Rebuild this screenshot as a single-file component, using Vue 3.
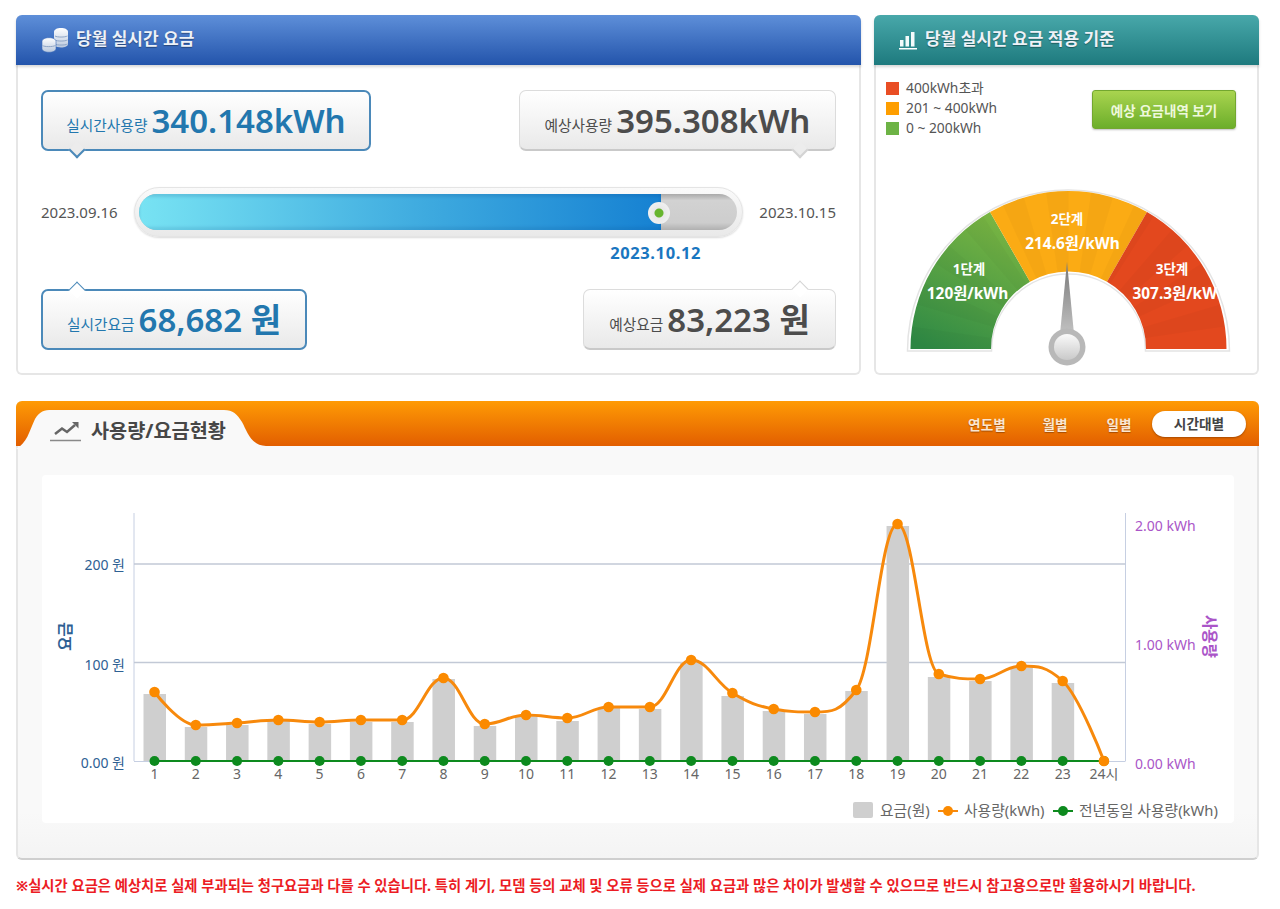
<template>
  <div class="page">
    <div class="top">
      <section class="panel usage">
        <header class="head blue">
          <svg class="coins" width="28" height="26" viewBox="0 0 28 26">
            <defs>
              <linearGradient id="coin" x1="0" y1="0" x2="0" y2="1">
                <stop offset="0" stop-color="#ffffff" />
                <stop offset="1" stop-color="#b9c8de" />
              </linearGradient>
            </defs>
            <path d="M13 5c0-2.500 3-4 7-4s7 1.500 7 4v12c0 2.200-3 3.600-7 3.600l-7-1z" fill="url(#coin)" />
            <path d="M14 9c2 1.400 10 1.400 12.500 0M14 13c2 1.400 10 1.400 12.500 0M14 17c2 1.400 10 1.400 12.500 0" stroke="#8ea5c6" fill="none" />
            <path d="M1 14.500c0-2.300 3-3.800 7-3.800s7 1.500 7 3.800v7c0 2.300-3 3.800-7 3.800s-7-1.500-7-3.800z" fill="url(#coin)" stroke="#3d6cb8" stroke-width=".6" />
            <path d="M1.500 18.500c2 1.500 10 1.500 13 0" stroke="#8ea5c6" fill="none" />
          </svg>
          <h2>당월 실시간 요금</h2>
        </header>
        <div class="usage-body">
          <div class="bubble-row">
            <div class="bubble on arrow-bottom" style="width:330px"><span class="lab">실시간사용량</span><b>340.148kWh</b></div>
            <div class="bubble arrow-bottom right" style="width:317px"><span class="lab">예상사용량</span><b>395.308kWh</b></div>
          </div>
          <div class="progress-row">
            <span class="date">2023.09.16</span>
            <div class="track">
              <div class="track-in">
                <div class="fill"></div>
                <i class="thumb"></i>
              </div>
            </div>
            <span class="date">2023.10.15</span>
          </div>
          <div class="today">2023.10.12</div>
          <div class="bubble-row">
            <div class="bubble on arrow-top" style="width:266px"><span class="lab">실시간요금</span><b>68,682 원</b></div>
            <div class="bubble arrow-top right" style="width:253px"><span class="lab">예상요금</span><b>83,223 원</b></div>
          </div>
        </div>
      </section>

      <section class="panel rate">
        <header class="head teal">
          <svg width="20" height="22" viewBox="0 0 20 22">
            <path d="M1 19h18v1.500H1z" fill="#fff" />
            <path d="M2 11h3.500v6.500H2zM7.500 7H11v10.500H7.500zM13 3h3.500v14.500H13z" fill="#f4fbfb" />
          </svg>
          <h2>당월 실시간 요금 적용 기준</h2>
        </header>
        <div class="rate-body">
          <div class="rate-top">
            <ul class="steps">
              <li><i style="background:#e94e24"></i>400kWh초과</li>
              <li><i style="background:#fe9e00"></i>201 ~ 400kWh</li>
              <li><i style="background:#6db345"></i>0 ~ 200kWh</li>
            </ul>
            <button class="detail">예상 요금내역 보기</button>
          </div>
          <svg class="gauge" width="345" height="186" viewBox="894 183 345 186">
            <defs>
              <linearGradient id="gGreen" gradientUnits="userSpaceOnUse" x1="1000" y1="205" x2="930" y2="350">
                <stop offset="0" stop-color="#80b942" />
                <stop offset="1" stop-color="#2f8a45" />
              </linearGradient>
              <linearGradient id="gNeedle" x1="0" y1="0" x2="0" y2="1">
                <stop offset="0" stop-color="#777" />
                <stop offset="1" stop-color="#c2c2c2" />
              </linearGradient>
              <linearGradient id="gKnob" x1="0" y1="0" x2="0" y2="1">
                <stop offset="0" stop-color="#fafafa" />
                <stop offset="1" stop-color="#c9c9c9" />
              </linearGradient>
            </defs>
            <path d="M905.500 351a161 161 0 0 1 322 0h-84a76.500 76.500 0 0 0-154 0z" fill="#fff" stroke="#e4e4e4" stroke-width="1.500" />
            <path d="M908.500 349a158 158 0 0 1 79.500-137L1028 281.700a77.500 77.500 0 0 0-39 67.300z" fill="url(#gGreen)" />
            <path d="M988 212a158 158 0 0 1 157 0L1105 281.700a77.500 77.500 0 0 0-77 0z" fill="#fbab14" />
            <path d="M1145 212a158 158 0 0 1 79.500 137H1144a77.500 77.500 0 0 0-39-67.300z" fill="#e3481e" />
            <path v-for="(d, i) in rays" :key="i" :d="d" fill="#000" opacity=".025" />
            <text class="g-t" x="1065" y="224">2단계</text>
            <text class="g-v" x="1070.500" y="249">214.6원/kWh</text>
            <text class="g-t" x="967" y="274">1단계</text>
            <text class="g-v" x="965.500" y="299">120원/kWh</text>
            <text class="g-t" x="1170" y="274">3단계</text>
            <svg x="1120" y="280" width="96" height="30" viewBox="1120 280 96 30">
              <text class="g-v" x="1130.500" y="299" style="text-anchor:start">307.3원/kWh</text>
            </svg>
            <path d="M1065 262l7 72h-14z" fill="url(#gNeedle)" />
            <circle cx="1065" cy="347" r="18.500" fill="#b8b8b8" />
            <circle cx="1065" cy="347" r="13" fill="url(#gKnob)" />
          </svg>
        </div>
      </section>
    </div>

    <section class="panel status">
      <header class="status-head">
        <svg class="tab" width="250" height="48" viewBox="0 0 250 48">
          <path d="M0 48c11-6 13-17 19-30C24 10 28 9 36 9h172c9 0 13 4 18 12 5 9 9 24 24 24v3z" fill="#f9f9f9" />
        </svg>
        <div class="tab-label">
          <svg width="32" height="26" viewBox="0 0 32 26">
            <path d="M5 17l7-5.500 5 3.500 8-7" fill="none" stroke="#666" stroke-width="2.500" />
            <path d="M22 5h6.500v6.500z" fill="#666" />
            <path d="M0 23.500h31" stroke="#8a8a8a" stroke-width="1.500" />
          </svg>
          <h2>사용량/요금현황</h2>
        </div>
        <nav class="periods">
          <a style="width:68px">연도별</a>
          <a style="width:68px">월별</a>
          <a style="width:60px">일별</a>
          <a class="sel">시간대별</a>
        </nav>
      </header>
      <div class="status-body">
        <svg class="chart" width="1192" height="348" viewBox="42 475 1192 348">
          <path d="M134 513V761M1125.500 513V761" stroke="#c6cfe2" fill="none" />
          <path d="M134 564H1125.500M134 662.500H1125.500" stroke="#c2c9d6" stroke-width="1.500" fill="none" />
          <path d="M134 761.500H1125.500" stroke="#c6cfe2" fill="none" />

          <rect v-for="b in bars" :key="b.x" :x="b.x - 11" :y="b.y" width="22.500" :height="761 - b.y" fill="#cfcfcf" />

          <path d="M154.500 761H1104" stroke="#0d8a1e" stroke-width="2" fill="none" />
          <circle v-for="x in xs" :key="x" :cx="x" cy="761" r="5" fill="#0d8a1e" />
          <path :d="linePath" stroke="#f7890c" stroke-width="3" fill="none" />
          <circle v-for="p in points" :key="p.x" :cx="p.x" :cy="p.y" r="5.300" fill="#fb8a00" />

          <text v-for="(x, i) in xs" :key="'h' + i" class="x-lab" :x="x" y="779">{{ i === 23 ? '24시' : i + 1 }}</text>

          <text class="y-l" x="125" y="570">200 원</text>
          <text class="y-l" x="125" y="670">100 원</text>
          <text class="y-l" x="125" y="768">0.00 원</text>
          <text class="y-l title" transform="translate(71 636.500) rotate(-90)">요금</text>

          <text class="y-r" x="1135" y="531">2.00 kWh</text>
          <text class="y-r" x="1135" y="650">1.00 kWh</text>
          <text class="y-r" x="1135" y="769">0.00 kWh</text>
          <text class="y-r title" transform="translate(1204 636.500) rotate(90)">사용량</text>

          <rect x="853" y="802" width="20" height="16" rx="2" fill="#cfcfcf" />
          <text class="leg" x="880" y="816">요금(원)</text>
          <path d="M938 811h20" stroke="#f7890c" stroke-width="2" />
          <circle cx="948" cy="811" r="5" fill="#fb8a00" />
          <text class="leg" x="964" y="816">사용량(kWh)</text>
          <path d="M1053 811h20" stroke="#0d8a1e" stroke-width="2" />
          <circle cx="1063" cy="811" r="5" fill="#0d8a1e" />
          <text class="leg" x="1079" y="816">전년동일 사용량(kWh)</text>
        </svg>
      </div>
    </section>

    <p class="notice">※실시간 요금은 예상치로 실제 부과되는 청구요금과 다를 수 있습니다. 특히 계기, 모뎀 등의 교체 및 오류 등으로 실제 요금과 많은 차이가 발생할 수 있으므로 반드시 참고용으로만 활용하시기 바랍니다.</p>
  </div>
</template>

<script setup>
const barTops = [694, 727, 725, 721, 724, 722, 722, 679, 726, 716, 721, 708, 709, 662, 696, 711, 714, 691, 526, 677, 681, 668, 683]
const lineTops = [692, 725, 723, 720, 722, 720, 720, 678, 724, 715, 718, 707, 707, 660, 693, 709, 712, 690, 524, 674, 679, 666, 681, 761]

const xs = lineTops.map((_, i) => 154.5 + i * 41.28)
const bars = barTops.map((y, i) => ({ x: xs[i], y }))
const points = lineTops.map((y, i) => ({ x: xs[i], y }))

// same smoothing as a highcharts spline
function spline(pts) {
  const s = 1.5
  const d = 2.5
  const ctl = pts.map((p, i) => {
    const a = pts[i - 1]
    const b = pts[i + 1]
    if (!a || !b) return { lx: p.x, ly: p.y, rx: p.x, ry: p.y }
    const lx = (s * p.x + a.x) / d
    const rx = (s * p.x + b.x) / d
    let ly = (s * p.y + a.y) / d
    let ry = (s * p.y + b.y) / d
    const c = ((ry - ly) * (rx - p.x)) / (rx - lx) + p.y - ry
    ly += c
    ry += c
    if (ly > a.y && ly > p.y) {
      ly = Math.max(a.y, p.y)
      ry = 2 * p.y - ly
    } else if (ly < a.y && ly < p.y) {
      ly = Math.min(a.y, p.y)
      ry = 2 * p.y - ly
    }
    if (ry > b.y && ry > p.y) {
      ry = Math.max(b.y, p.y)
      ly = 2 * p.y - ry
    } else if (ry < b.y && ry < p.y) {
      ry = Math.min(b.y, p.y)
      ly = 2 * p.y - ry
    }
    return { lx, ly, rx, ry }
  })
  let out = `M${pts[0].x} ${pts[0].y}`
  for (let i = 1; i < pts.length; i++) {
    out += `C${ctl[i - 1].rx} ${ctl[i - 1].ry} ${ctl[i].lx} ${ctl[i].ly} ${pts[i].x} ${pts[i].y}`
  }
  return out
}
const linePath = spline(points)

// faint wedges on the gauge
const rays = []
for (let i = 0; i < 22; i += 2) {
  const a1 = Math.PI - (i / 22) * Math.PI
  const a2 = Math.PI - ((i + 1) / 22) * Math.PI
  const pt = (r, a) => `${(1066.5 + r * Math.cos(a)).toFixed(1)} ${(349 - r * Math.sin(a)).toFixed(1)}`
  rays.push(`M${pt(77.5, a1)}L${pt(158, a1)}A158 158 0 0 1 ${pt(158, a2)}L${pt(77.5, a2)}A77.5 77.5 0 0 0 ${pt(77.5, a1)}z`)
}
</script>

<style>
body {
  background: #fff;
}
</style>

<style scoped>
.page {
  width: 1280px;
  height: 909px;
  box-sizing: border-box;
  padding: 15px 21px 0 16px;
  overflow: hidden;
  font-family: "Noto Sans", "Noto Sans CJK KR", sans-serif;
  color: #555;
}
h2 {
  margin: 0;
  font-weight: 500;
}
.top {
  display: flex;
  gap: 13px;
}
.panel {
  box-sizing: border-box;
  border: 2px solid #e6e6e6;
  border-top: 0;
  border-radius: 6px;
  background: #fff;
}
.usage {
  width: 845px;
  height: 360px;
}
.rate {
  width: 385px;
  height: 360px;
}
.head {
  height: 50px;
  margin: 0 -2px;
  display: flex;
  align-items: center;
  border-radius: 6px 6px 0 0;
  color: #eef2f8;
  box-shadow: 0 2px 3px rgba(0, 0, 0, .16);
}
.head h2 {
  font-size: 17px;
  font-weight: 700;
  line-height: 24px;
  margin-top: -3px;
  text-shadow: 0 1px 1px rgba(0, 0, 0, .35);
}
.blue {
  padding-left: 25px;
  gap: 7px;
  background: linear-gradient(#5e8fd9, #2354ab);
}
.teal {
  padding-left: 24px;
  gap: 7px;
  background: linear-gradient(#48a8aa, #1e7a7e);
}
.usage-body {
  padding: 25px 23px 0 23px;
}
.bubble-row {
  display: flex;
  justify-content: space-between;
}
.bubble {
  position: relative;
  box-sizing: border-box;
  height: 61px;
  display: flex;
  align-items: center;
  justify-content: center;
  gap: 4px;
  border: 1px solid #dcdcdc;
  border-bottom: 2px solid #c9c9c9;
  border-radius: 7px;
  background: linear-gradient(#fff, #e9e9e9);
  color: #4c4c4c;
}
.bubble b {
  font-size: 33px;
  font-weight: 600;
  line-height: 1;
}
.lab {
  font-size: 14.700px;
  padding-top: 8px;
}
.bubble.on {
  border: 2px solid #4b89b9;
  color: #2277ae;
}
.bubble::after {
  content: "";
  position: absolute;
  left: 28px;
  width: 12px;
  height: 12px;
  transform: rotate(45deg);
  background: #ececec;
  border: 1px solid #d4d4d4;
  box-sizing: border-box;
}
.bubble.right::after {
  left: auto;
  right: 29px;
}
.arrow-bottom::after {
  bottom: -7px;
  border-width: 0 2px 2px 0;
}
.arrow-top::after {
  top: -7px;
  background: #fff;
  border-width: 1px 0 0 1px;
}
.bubble.on::after {
  border-color: #4b89b9;
}
.progress-row {
  display: flex;
  align-items: center;
  justify-content: space-between;
  margin-top: 35px;
  height: 51px;
}
.date {
  font-size: 15px;
  color: #555;
}
.track {
  box-sizing: border-box;
  width: 609px;
  height: 50px;
  padding: 6px 5px 6px 4px;
  border-radius: 25px;
  background: linear-gradient(#fafafa, #e9e9e9);
  border: 1px solid #e4e4e4;
  box-shadow: 0 1px 2px rgba(0, 0, 0, .15);
}
.track-in {
  position: relative;
  height: 100%;
  border-radius: 19px;
  overflow: hidden;
  background: linear-gradient(#a9a9a9, #d2d2d2 18%, #cdcdcd 80%, #b0b0b0);
}
.fill {
  width: 522px;
  height: 100%;
  background: linear-gradient(90deg, #78e3f3, #3eaadf 55%, #1681d2);
  box-shadow: inset 0 3px 3px rgba(0, 60, 120, .15), inset 0 -3px 3px rgba(0, 60, 120, .12);
}
.thumb {
  position: absolute;
  left: 509px;
  top: 8px;
  width: 22px;
  height: 22px;
  border-radius: 50%;
  background: radial-gradient(circle, #67b52e 0, #67b52e 4px, #e8e8e8 5px, #f6f6f6);
}
.today {
  margin: 4px 135px 24px 0;
  text-align: right;
  color: #1976c0;
  font-size: 16.500px;
  letter-spacing: .6px;
  font-weight: 700;
  line-height: 24px;
  height: 24px;
}
.rate-body {
  padding: 0 0 0 10px;
}
.rate-top {
  display: flex;
  justify-content: space-between;
  padding: 13px 21px 0 0;
  height: 74px;
  box-sizing: border-box;
}
.steps {
  list-style: none;
  margin: 0;
  padding: 0;
  font-size: 13.800px;
  line-height: 20px;
  color: #555;
}
.steps li {
  display: flex;
  align-items: center;
  gap: 7px;
}
.steps i {
  width: 13px;
  height: 13px;
}
.detail {
  width: 144px;
  height: 39px;
  margin-top: 12px;
  padding: 0;
  border: 1px solid #73a72f;
  border-radius: 3px;
  background: linear-gradient(#a9d44f, #6cae2a);
  color: #eef8dc;
  font: 700 13.500px "Noto Sans", "Noto Sans CJK KR", sans-serif;
  box-shadow: 0 1px 2px rgba(0, 0, 0, .25);
}
.gauge {
  display: block;
  margin: 44px 0 0 10px;
}
.g-t,
.g-v {
  fill: #fff;
  font-size: 13.500px;
  font-weight: 700;
  text-anchor: middle;
}
.g-v {
  font-size: 15.400px;
}
.status {
  position: relative;
  width: 1243px;
  height: 459px;
  margin-top: 26px;
  border-bottom-color: #cfcfcf;
  background: linear-gradient(#f9f9f9 90%, #f4f4f4);
}
.status-head {
  position: relative;
  height: 45px;
  margin: 0 -2px;
  display: flex;
  align-items: center;
  justify-content: space-between;
  border-radius: 6px 6px 0 0;
  background: linear-gradient(#ff9b05, #e25e00);
}
.tab {
  position: absolute;
  top: 0;
  left: 0;
}
.tab-label {
  position: relative;
  display: flex;
  align-items: center;
  gap: 9px;
  margin: 12px 0 0 34px;
}
.tab-label h2 {
  font-size: 19.700px;
  font-weight: 700;
  color: #474747;
}
.periods {
  position: relative;
  display: flex;
  align-items: center;
  margin: 0 13px 0 0;
  font-size: 13.700px;
  font-weight: 700;
  color: #fbe6d0;
  text-shadow: 0 1px 1px rgba(120, 50, 0, .6);
}
.periods a {
  text-align: center;
}
.periods .sel {
  width: 94px;
  height: 26px;
  line-height: 26px;
  margin-left: 3px;
  border-radius: 13px;
  background: #fff;
  color: #444;
  text-shadow: none;
  box-shadow: 0 1px 2px rgba(120, 50, 0, .6);
}
.status-body {
  padding: 29px 0 0 24px;
}
.chart {
  display: block;
  background: #fff;
  border-radius: 4px;
}
.x-lab {
  fill: #666;
  font-size: 14px;
  text-anchor: middle;
}
.y-l {
  fill: #2e6093;
  font-size: 14px;
  text-anchor: end;
}
.y-r {
  fill: #aa55c8;
  font-size: 14px;
}
.title {
  font-size: 15.500px;
  font-weight: 700;
  text-anchor: middle;
}
.leg {
  fill: #666;
  font-size: 14.800px;
}
.notice {
  margin: 16px 0 0;
  color: #ec1c24;
  font-size: 14.340px;
  line-height: 20px;
  font-weight: 700;
  white-space: nowrap;
}
</style>
